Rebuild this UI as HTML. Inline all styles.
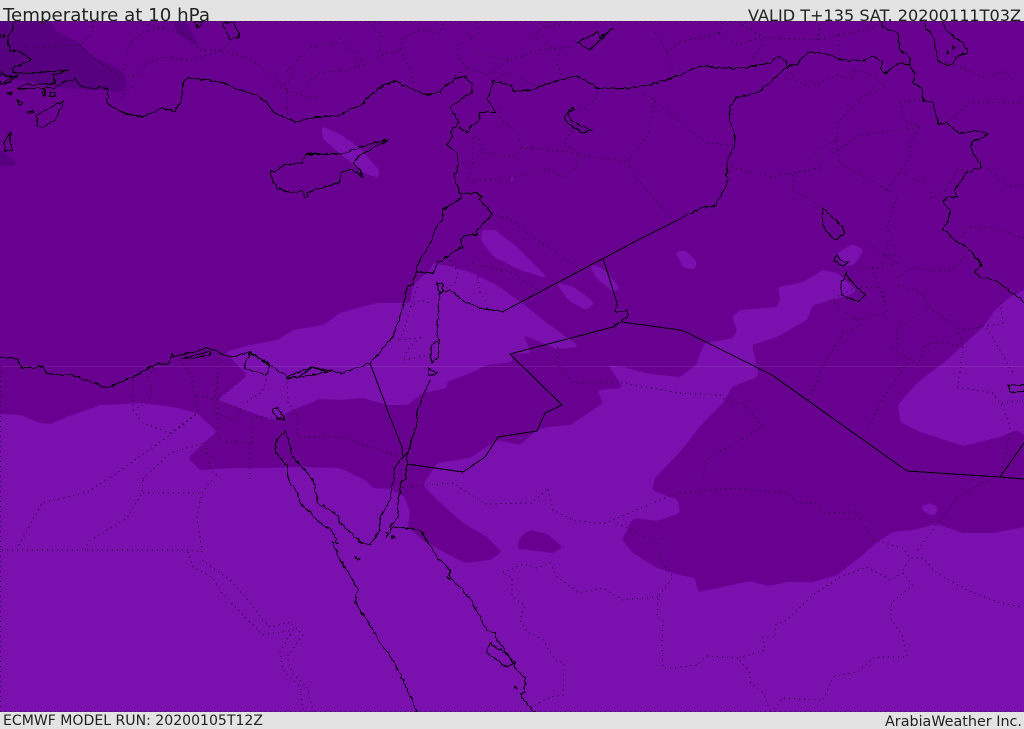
<!DOCTYPE html>
<html><head><meta charset="utf-8"><title>Temperature at 10 hPa</title>
<style>
html,body{margin:0;padding:0;background:#e3e3e3;width:1024px;height:729px;overflow:hidden}
svg{display:block;position:absolute;left:0;top:0}
.t{font-family:"DejaVu Sans","Liberation Sans",sans-serif;fill:#222}
.c{fill:none;stroke:#000;stroke-width:1;stroke-linejoin:round;shape-rendering:crispEdges}
.d{fill:none;stroke:#000;stroke-width:1;stroke-dasharray:1 4;shape-rendering:crispEdges;opacity:.8}
</style></head><body>
<svg width="1024" height="729" viewBox="0 0 1024 729" xmlns="http://www.w3.org/2000/svg">
<defs>
<filter id="sm" filterUnits="userSpaceOnUse" x="-40" y="-20" width="1110" height="790" color-interpolation-filters="sRGB">
<feGaussianBlur stdDeviation="1.6"/>
<feComponentTransfer><feFuncA type="linear" slope="12" intercept="-5.5"/></feComponentTransfer>
</filter>
<filter id="wg" filterUnits="userSpaceOnUse" x="-40" y="-20" width="1110" height="790" color-interpolation-filters="sRGB">
<feTurbulence type="fractalNoise" baseFrequency="0.22" numOctaves="2" seed="4" result="n"/>
<feDisplacementMap in="SourceGraphic" in2="n" scale="4" xChannelSelector="R" yChannelSelector="G"/>
</filter>
</defs>
<rect width="1024" height="729" fill="#e3e3e3"/>
<rect x="0" y="21" width="1024" height="691" fill="#680090"/>
<svg x="0" y="21" width="1024" height="691" viewBox="0 21 1024 691">
<!-- darkest -->
<g fill="#570080" filter="url(#sm)">
<path d="M-20 0L50 0 50 21 55 30 80 43 93 57 113 65 124 74 127 83 123 93 100 90 63 88 20 80 -20 73Z"/>
<path d="M163 0L185 0 185 21 192 32 199 47 190 42 177 33Z"/>
<path d="M-20 145L0 150 10 157 19 165 10 166 -20 167Z"/>
</g>
<g fill="#7a10ae" filter="url(#sm)">
<!-- light main -->
<path d="M-20 412L0 414 20 415 40 423 50 424 67 417 100 405 143 403 173 407 197 413 217 432 207 440 188 458 200 470 233 468 267 468 300 467 340 468 365 480 373 488 390 489 405 497 410 513 408 527 420 538 440 550 465 563 490 560 502 552 487 537 463 523 437 500 423 485 437 463 470 458 497 440 520 445 537 430 547 427 570 425 603 403 597 390 623 388 608 365 623 367 650 374 680 377 696 365 700 353 705 343 733 338 737 330 732 317 740 310 777 307 780 300 778 287 803 282 823 270 837 273 857 290 850 295 813 305 807 320 777 337 752 345 758 372 757 377 732 387 723 403 703 423 680 452 655 478 652 490 678 500 680 513 657 521 633 518 622 540 633 553 657 568 680 575 695 578 698 592 723 587 750 581 768 586 787 582 813 582 837 575 860 557 877 542 893 532 913 530 937 524 963 533 993 533 1024 527 1044 524L1044 740 -20 740Z"/>
<!-- central light tongue -->
<path d="M225 352L250 345 277 340 293 330 323 325 340 313 357 308 377 303 410 303 413 285 430 270 433 263 453 267 473 273 500 287 527 307 547 323 580 347 557 349 540 342 523 335 532 353 511 354 513 362 487 365 473 372 447 382 447 388 423 393 408 405 387 405 363 398 340 400 320 399 293 410 273 420 250 412 217 400 227 392 247 375Z"/>
<!-- east patch -->
<path d="M1044 280L1024 290 1010 297 995 310 983 327 947 360 917 383 898 405 900 422 920 432 963 446 1000 437 1017 430 1024 435 1044 440Z"/>
<!-- small light patches -->
<path d="M321 126L340 134 361 149 379 170 379 178 365 174 344 157 323 139Z"/>
<path d="M482 230L495 230 516 246 549 279 520 270 494 257 481 241Z"/>
<path d="M589 263L604 269 620 288 613 292 596 278Z"/>
<path d="M555 282L574 287 595 303 586 310 569 301Z"/>
<path d="M675 252L685 250 697 262 694 270 683 267Z"/>
<path d="M837 253L853 244 864 250 854 265 842 266Z"/>
<path d="M920 507L930 503 938 507 935 516 926 513Z"/>
</g>
<rect x="511" y="177" width="2" height="4" fill="#7a10ae"/>
<!-- dark blob -->
<path fill="#680090" filter="url(#sm)" d="M517 549L520 537 530 530 547 534 563 547 553 553 530 550Z"/>
<rect x="0" y="366" width="1024" height="1" fill="#fff" opacity=".09"/>
<!-- dotted borders -->
<g class="d">
<path d="M0 21.5H1024M0 711.5H1024M.5 366V712"/>
<path d="M92 21L93 32 80 45 40 47 27 45 20 52M80 45L93 57 113 72 120 78 137 75 147 63 163 57 193 60 222 50 230 42M123 70L130 43 143 32 163 28 135 22M163 28L187 35 200 50 222 50M222 52L250 58 277 80 287 90 288 103 287 117M280 88L293 78 287 72 300 57 310 47 340 42M287 90L310 98 320 95M307 83L320 73 340 70M132 87L117 102"/>
<path d="M340 72L363 65 383 55 400 50 402 37 420 30 440 33 443 22M340 38L350 50 363 63M368 22L382 35 378 48 383 55M400 50L412 72 413 83M478 22L478 35 458 45 458 58 467 68 453 77M467 68L487 75 510 60 540 50 573 47M473 52L510 60M507 72L493 81M507 72L537 87M547 22L533 37 547 45 560 50 557 63 563 78M570 23L543 28M597 88L597 97 585 108 573 110M653 28L667 52 673 72M667 52L680 43"/>
<path d="M500 107L500 118 517 133 522 147 513 157 483 152 480 140 475 135 472 143 473 163 458 163M473 163L468 177 475 180 467 190M475 181L510 178 547 168 563 178 578 165 578 154 627 162 648 135 655 100 640 92M655 101L680 122M522 147L577 153M577 128L567 137 565 143 578 154M627 162L635 177 673 220M492 215L507 217 537 240 577 267"/>
<path d="M680 42L718 33 738 45 760 37 818 40 838 35 873 28 880 22M718 33L723 22M738 22L760 35 762 45 753 58 770 63M818 40L820 22M838 35L840 57M787 68L795 80 810 87 837 75 853 80 853 70 873 75 885 87 860 98 838 123 837 140 815 150 820 168 793 173 793 190 815 202 822 210M820 168L770 177 727 166M682 125L708 143 733 145M837 140L840 163 887 190 897 197 887 227 893 240M833 153L860 135 920 127 910 143 910 157 887 190M920 100L900 102 905 120 920 127M900 172L920 182 930 185 932 198 947 190 957 170 967 170M950 120L970 102 1023 103M980 162L1008 187 1023 185M1013 80L1003 70 987 78 953 65M962 238L967 227 990 227 1024 238"/>
<path d="M862 267L878 268 898 263 883 255 897 255M890 240L883 255M870 242L880 253M872 268L885 302 887 312 857 320 830 300 857 287 882 288 885 302M857 320L860 327 843 333 823 365 808 402M897 277L913 268 947 272 967 255M898 285L920 292 930 307 910 320 897 330 897 343 893 348 918 365 925 345 943 342 963 347 957 327 930 308M963 330L1003 323 1000 300M987 328L1013 373M963 347L958 387 993 393 1003 407 1010 427 1010 433 1000 477M1002 403L1024 400M907 363L880 403 862 440M680 393L720 395 727 402 742 403 763 427 705 460 703 480M558 347L557 363 573 383 617 382 680 393"/>
<path d="M680 493L733 488 787 493 797 503 818 503 823 513 857 512 873 540 903 548 910 558 923 558 937 573 967 590 1000 603 1022 607M918 550L938 523 957 497 988 480M903 570L910 558M903 573L913 585 892 602 890 617 903 637 907 657 875 657 857 672 833 677 823 700 783 698 772 712M903 573L890 580 867 567 840 577 813 595 787 620 775 625 775 637 763 637 765 650 738 658 750 673 750 682 763 693 770 710M738 658L707 656 697 665 680 667"/>
<path d="M402 487L453 483 485 504 532 503 548 488 553 510 573 520 603 524 667 497 680 493M617 523L657 543 662 563 673 577 658 597 657 617 663 620 662 647 663 668 680 668M658 597L622 600 603 588 580 593 557 577 550 563 537 568 523 564 502 573 512 577 512 597 525 605 520 620 527 632 543 640 555 660 564 663 563 695 550 697 532 707"/>
<path d="M2 550L188 550 202 552 197 517 202 493 212 480M143 493L202 493M143 480L142 493 127 518 88 542 85 550M105 480L88 492 42 503 18 547M188 552L193 567 213 578 222 593 250 622 263 635 293 630 280 652 283 670 300 687 303 710M202 560L230 580 250 603 263 620 270 627 290 622 303 635 287 657 292 673 307 687 313 712"/>
<path d="M133 380L133 410 143 423 170 433 198 413M133 410L147 403 153 393 147 377 157 367M180 360L192 377 195 397 198 413 170 435 107 480M197 395L217 400 243 410 233 420 213 413 218 373M218 353L218 433 220 442 252 442 252 417 283 418M247 402L262 392 267 377M220 397L245 377M287 377L288 403 298 417 297 437 340 437 400 457M205 443L210 470 217 476M143 479L170 453 203 443M250 443L250 480"/>
<path d="M410 307L420 300 430 303M417 287L403 333 397 340 420 338 407 350 403 360 430 355M450 260L458 272 455 283 443 290M472 263L513 273 537 290M478 277L480 293 488 303"/>
</g>
<!-- straight borders -->
<g class="c">
<path d="M370 363L385 403 388 412 402 447 403 457"/>
<path d="M502 312L638 240 680 219"/>
<path d="M407 464L463 472 485 457 498 437 537 431 545 413 562 405 510 354 613 327"/>
<path d="M622 322L680 330 688 333 772 375 907 471 1000 477 1024 479M1000 477L1024 443"/>
<path d="M617 303L603 258"/>
</g>
<!-- coasts -->
<g class="c" filter="url(#wg)">
<path d="M13 21L13 30 7 37 10 50 20 52 32 60 13 68 13 73 33 73 68 70 53 75 55 83 22 85 18 89 55 88 63 82 75 79 82 87 93 89 100 86 108 90 107 103 120 112 133 115 142 117 163 108 175 111 180 103 183 93 183 82 188 78 213 81 223 83 240 90 257 95 267 103 273 112 295 122 312 118 340 115 353 108 362 105 365 100 383 85 395 81 405 86 427 95 440 92 445 86 457 78 463 76 472 83 472 92 450 107 459 123 450 132 452 137 447 145 457 153 458 165 454 177 460 193 461 198 443 210 442 220 435 230 432 240 420 260 415 272 413 285 407 286 403 307 393 337 370 363 357 368 340 373 313 367 287 377 272 366 250 352 230 357 208 348 173 357 172 353 168 365 157 363 133 377 107 388 93 383 72 375 47 374 43 367 22 368 17 359 0 357"/>
<path d="M0 33L5 35 3 38 0 37M0 72L12 78 18 75 0 84M7 92L12 93 10 95ZM17 100L23 103 20 105ZM27 111L33 111 33 113 27 113ZM42 93L45 90 45 96ZM50 93L55 93 55 96 50 96ZM0 75L17 77 7 83 0 84Z"/>
<path d="M63 101L37 115 37 125 42 128 55 120 60 110ZM10 133L4 143 5 152 12 150 10 140ZM193 22L203 22 198 28ZM222 23L233 22 240 37 230 40Z"/>
<path d="M270 170L273 182 278 188 290 193 302 191 305 197 308 197 307 192 320 188 333 185 340 182 340 178 342 172 352 170 363 177 360 170 353 163 360 155 388 140 373 143 340 154 305 154 303 163 283 165 275 173Z"/>
<path d="M182 358L195 355 210 352 210 355 195 358ZM245 363L250 353 270 366 267 375 257 372 245 368ZM287 378L300 376 313 367 328 372 315 375 300 377Z"/>
<path d="M285 430L277 440 274 450 288 467 288 480 297 492 300 502 317 520 333 532 337 543 332 542 335 548 340 560 350 575 358 590 355 602 367 620 380 642 393 660 410 695 417 712M285 430L293 457 313 479 318 503 337 515 340 523 360 542 370 545 380 530 380 517 390 500 393 480 395 467 403 457 408 453 407 467 405 480 402 480 398 500 398 517 390 527 390 532 393 527 420 530 428 542 437 557 450 570 450 578 463 590 473 603 487 630 495 633 497 640 510 657 515 667 525 678 525 693 520 695 530 707 533 712"/>
<path d="M272 410L278 408 285 420 277 418ZM490 643L487 653 507 667 515 663 508 655 497 648ZM355 557L360 559 358 561ZM385 533L389 533 387 536ZM392 535L395 537 392 538ZM447 577L449 579M515 687L518 689"/>
<path d="M439 293L437 333 439 340 431 347 431 360 432 363 438 357 439 340M428 368L437 373 433 376 429 375ZM430 380L417 410 417 423 408 453M437 283L443 285 443 292 437 291ZM439 293L450 290 465 302 480 308 502 312"/>
<path d="M613 327L628 317 627 310 615 312 617 303"/>
<path d="M461 193L477 193 483 197 478 200 488 208 492 215 475 232 478 235 467 235 460 239 462 247 457 250 438 263 433 273 415 272"/>
<path d="M459 128L468 133 470 127 478 122 480 112 495 112 488 100 493 81 512 85 513 91 533 90 543 85 567 78 577 76 598 88 623 89 650 85 680 75 700 66 723 68 743 68 770 63 778 56 786 60 787 67 797 65 807 53 823 53 843 60 860 61 873 56 883 62 880 68 885 73 900 63 910 65M787 67L758 93 737 97 730 107 729 120 735 133 735 143 727 163 727 185 715 205 700 209 680 219"/>
<path d="M882 22L882 27 898 33 900 50 910 58 910 68 915 73 913 83 922 88 923 100 933 103 938 123 947 123 959 133 977 131 989 134 972 142 972 152 980 163 981 168 967 172 955 190 957 197 947 197 943 203 950 210 948 222 942 228 955 240 967 247 982 265 975 272 980 278 993 279 1024 302"/>
<path d="M925 22L925 28 933 35 938 60 947 66 953 63 957 57 968 52 963 43 947 32 942 22M947 50L949 52 947 54ZM952 46L955 47 953 49Z"/>
<path d="M573 107L564 117 570 125 582 133 592 130 585 127 573 122 568 115 573 110ZM577 42L590 50 600 40 613 28 600 38 597 32 585 39Z"/>
<path d="M823 208L822 217 825 230 835 240 845 233 843 227 833 218ZM837 255L834 260 843 267 849 262 841 261ZM847 272L841 283 842 295 858 302 865 295 853 283 846 275ZM1008 385L1024 385 1024 392 1010 392Z"/>
</g>
</svg>
<text class="t" x="3" y="21" font-size="18" textLength="207" lengthAdjust="spacingAndGlyphs">Temperature at 10 hPa</text>
<text class="t" x="748" y="21" font-size="16" textLength="273" lengthAdjust="spacingAndGlyphs">VALID T+135 SAT. 20200111T03Z</text>
<text class="t" x="3" y="725" font-size="14" textLength="260" lengthAdjust="spacingAndGlyphs">ECMWF MODEL RUN: 20200105T12Z</text>
<text class="t" x="885" y="726" font-size="14" textLength="137" lengthAdjust="spacingAndGlyphs">ArabiaWeather Inc.</text>
</svg>
</body></html>
